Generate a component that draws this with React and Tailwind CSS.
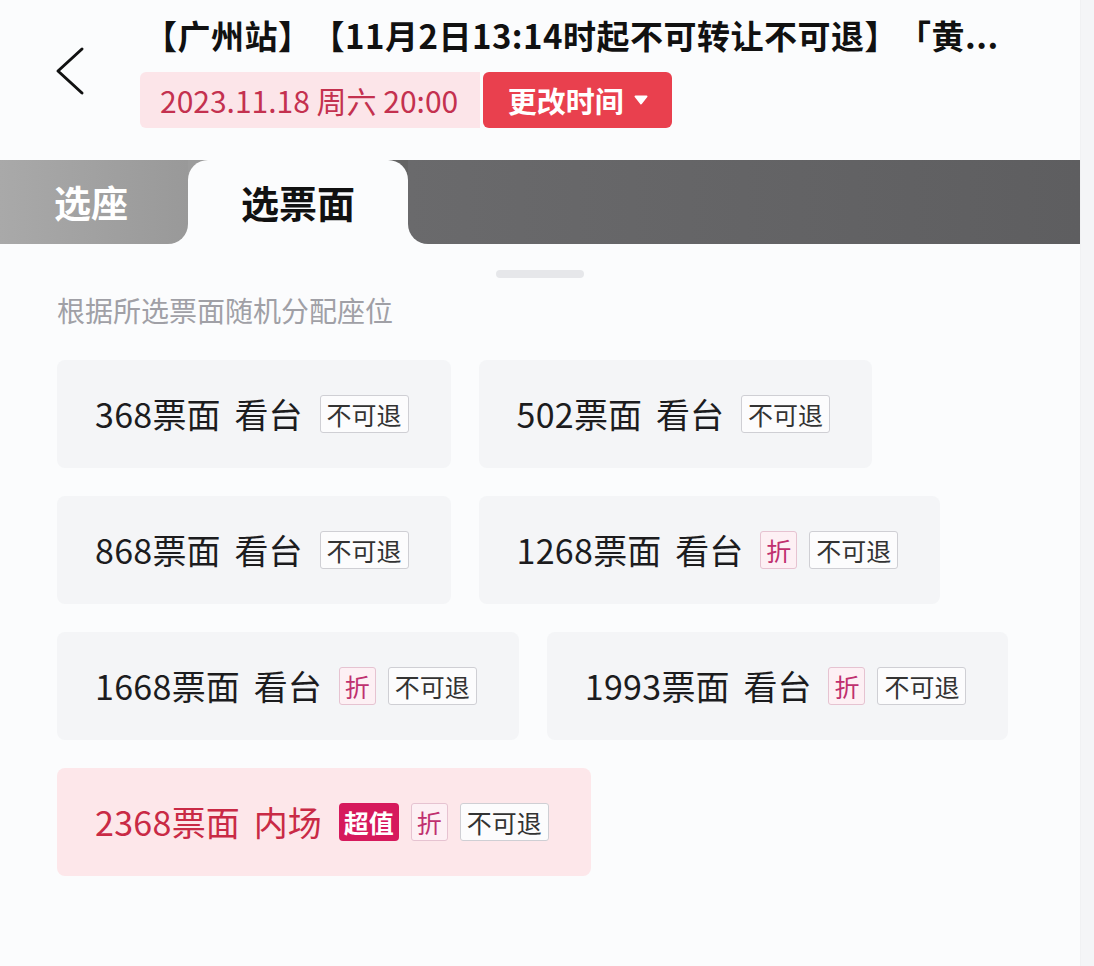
import React from 'react';

const tickets = [
  { price: 368, area: '看台', tags: ['no'] },
  { price: 502, area: '看台', tags: ['no'] },
  { price: 868, area: '看台', tags: ['no'] },
  { price: 1268, area: '看台', tags: ['zhe', 'no'] },
  { price: 1668, area: '看台', tags: ['zhe', 'no'] },
  { price: 1993, area: '看台', tags: ['zhe', 'no'] },
  { price: 2368, area: '内场', tags: ['chao', 'zhe', 'no'], hot: true },
];

const Tag = ({ kind }) => {
  if (kind === 'chao') {
    return (
      <span className="h-[38px] px-[5px] flex items-center rounded-[4px] bg-[#d6195c] text-white text-[25px] font-bold leading-none">
        超值
      </span>
    );
  }
  if (kind === 'zhe') {
    return (
      <span className="h-[38px] px-[5px] flex items-center rounded-[3px] border border-[#e6c3d1] bg-[#fdf0f4] text-[#c0306f] text-[25px] leading-none">
        折
      </span>
    );
  }
  return (
    <span className="h-[38px] px-[6px] flex items-center rounded-[3px] border border-[#cfcfd4] bg-[#fcfcfd] text-[#333] text-[25px] leading-none">
      不可退
    </span>
  );
};

const TicketCard = ({ ticket }) => (
  <div
    className={`h-[108px] pl-[38px] pr-[42px] flex items-center rounded-[8px] ${
      ticket.hot ? 'bg-[#fde7ea] text-[#c92a45]' : 'bg-[#f4f5f7] text-[#1c1c1e]'
    }`}
  >
    <span className="text-[34px] leading-none">
      <span className="tracking-[0.3px]">{ticket.price}</span>票面
    </span>
    <span className="text-[34px] leading-none ml-[14px]">{ticket.area}</span>
    <div className="flex items-center gap-[12px] ml-[17px]">
      {ticket.tags.map((t, i) => (
        <Tag key={i} kind={t} />
      ))}
    </div>
  </div>
);

export default function App() {
  return (
    <div
      className="w-[1094px] h-[966px] flex bg-[#fbfcfd] overflow-hidden"
      style={{ fontFamily: '"Noto Sans CJK SC", "Noto Sans", sans-serif' }}
    >
      <div className="w-[1080px] flex flex-col">
        {/* header */}
        <div className="h-[160px] flex">
          <div className="w-[140px] pl-[55px] pt-[46px]">
            <svg width="30" height="50" viewBox="0 0 30 50" fill="none">
              <path d="M27 3 L3 25 L27 47" stroke="#111" strokeWidth="3" strokeLinecap="round" strokeLinejoin="round" />
            </svg>
          </div>
          <div className="flex flex-col pt-[14px]">
            <div className="ml-[4px] text-[33px] leading-[42px] font-bold tracking-[0.5px] text-[#111] whitespace-nowrap [text-spacing-trim:space-all]">
              【广州站】【11月2日13:14时起不可转让不可退】「黄...
            </div>
            <div className="flex mt-[16px] h-[56px] gap-[3px]">
              <span className="flex items-center pl-[20px] pr-[22px] rounded-l-[6px] bg-[#fce5e9] text-[#c4314f] text-[30px] leading-none">
                2023.11.18 周六 20:00
              </span>
              <button className="w-[189px] flex items-center justify-center gap-[10px] rounded-[6px] bg-[#e9404e] text-white text-[29px] font-bold leading-none">
                更改时间
                <svg width="14" height="10" viewBox="0 0 14 10">
                  <path d="M1.5 1.5 H12.5 L7 8.5 Z" fill="white" stroke="white" strokeWidth="2" strokeLinejoin="round" />
                </svg>
              </button>
            </div>
          </div>
        </div>

        {/* tabs */}
        <div className="h-[84px] flex bg-[linear-gradient(to_bottom,transparent_42px,#fbfcfd_42px),linear-gradient(to_right,#9c9c9c_300px,#646464_300px)]">
          <div className="w-[188px] rounded-br-[20px] bg-[linear-gradient(to_right,#a9a9a9,#999999)] flex items-center pl-[54px]">
            <span className="text-[37px] font-bold text-white leading-none">选座</span>
          </div>
          <div className="w-[220px] rounded-t-[20px] bg-[#fbfcfd] flex items-center justify-center">
            <span className="text-[38px] font-bold text-[#111] leading-none">选票面</span>
          </div>
          <div className="flex-1 rounded-bl-[20px] bg-[linear-gradient(to_right,#6a6a6c,#5e5e60)]" />
        </div>

        {/* body */}
        <div className="flex justify-center mt-[26px]">
          <div className="w-[88px] h-[8px] rounded-full bg-[#e6e7ea]" />
        </div>
        <div className="px-[57px] mt-[14px]">
          <p className="text-[28px] leading-[36px] text-[#a0a0a6]">根据所选票面随机分配座位</p>
          <div className="w-[990px] flex flex-wrap gap-x-[28px] gap-y-[28px] mt-[32px]">
            {tickets.map((t) => (
              <TicketCard key={t.price} ticket={t} />
            ))}
          </div>
        </div>
      </div>
      <div className="flex-1 bg-[#f4f5f7] border-l border-[#f0f1f3]" />
    </div>
  );
}
